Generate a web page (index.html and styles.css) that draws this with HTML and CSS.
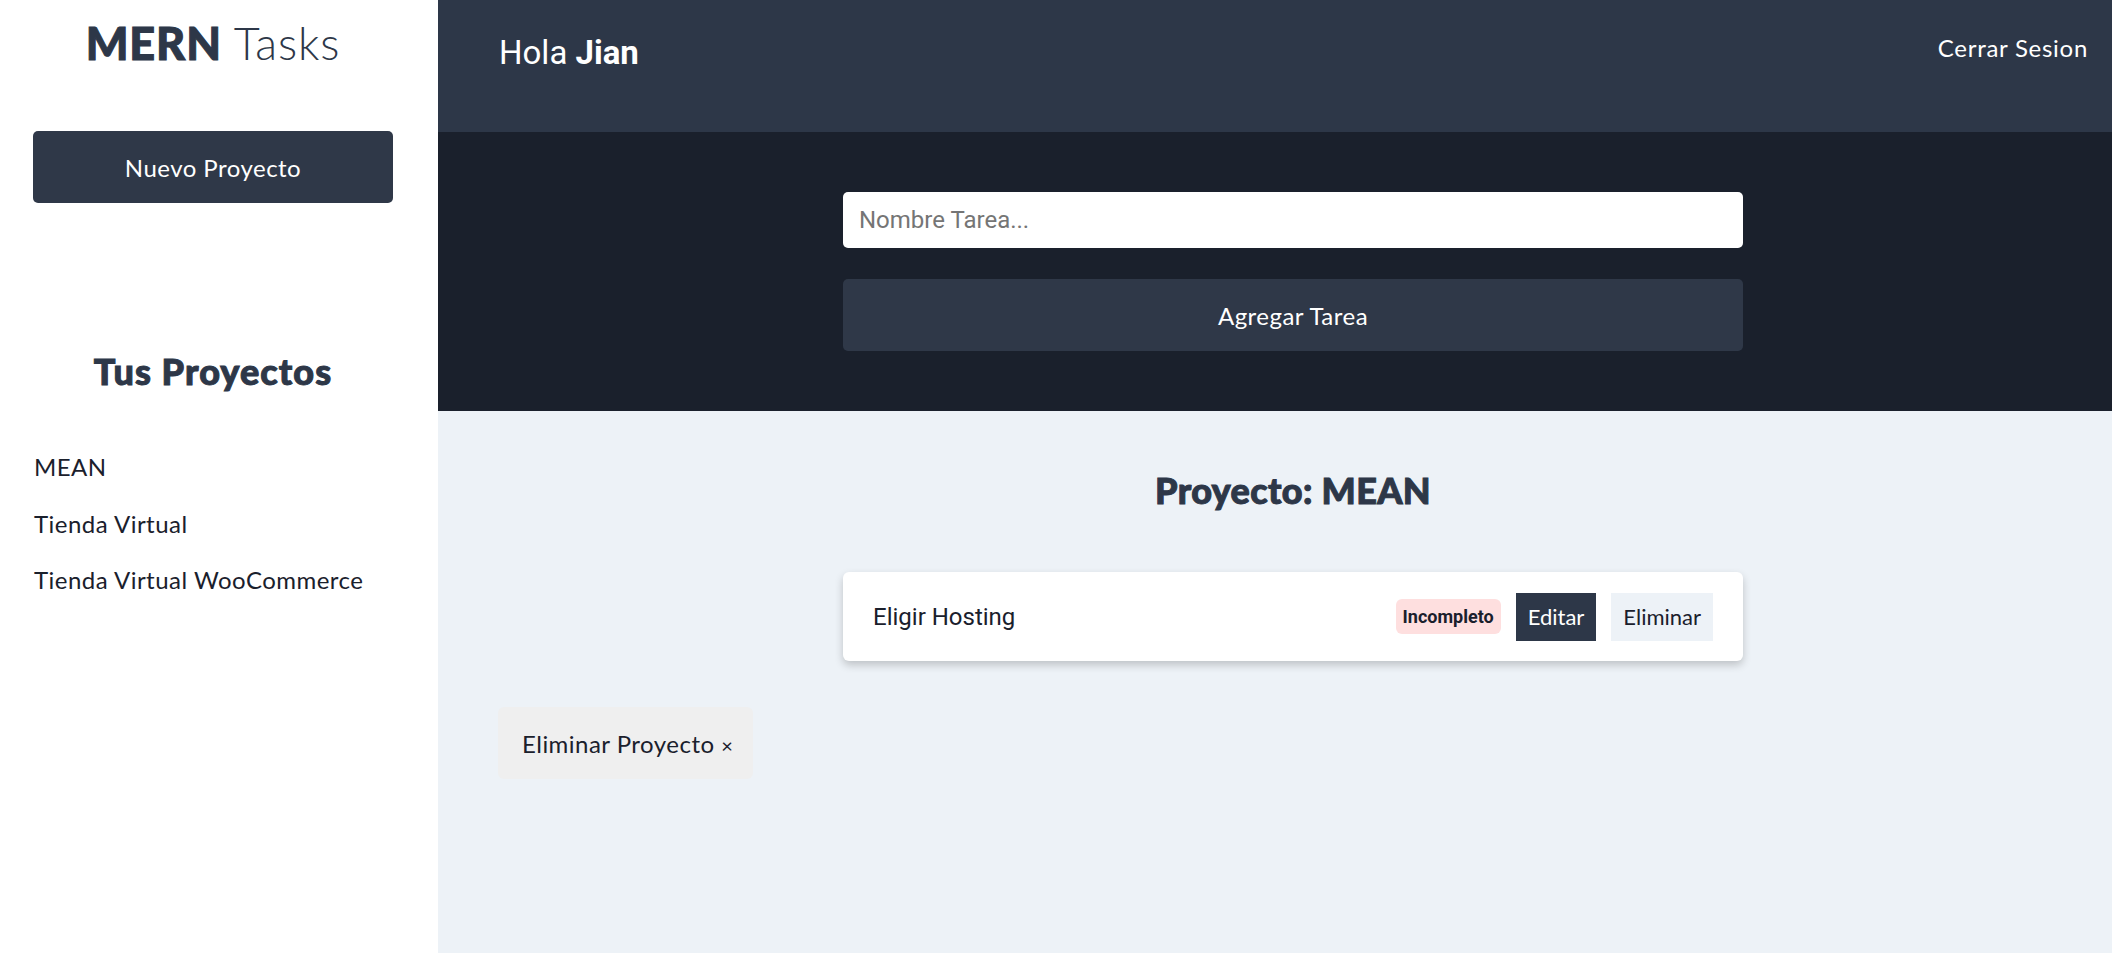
FILE: index.html
```html
<!DOCTYPE html>
<html lang="es">
<head>
<meta charset="utf-8">
<title>MERN Tasks</title>
<link rel="stylesheet" href="styles.css">
</head>
<body>
<div class="app">
  <aside class="sidebar">
    <h1 class="logo"><span class="logo-strong">MERN</span> Tasks</h1>
    <button class="btn-new" type="button">Nuevo Proyecto</button>
    <h2 class="sidebar-title">Tus Proyectos</h2>
    <ul class="project-list">
      <li>MEAN</li>
      <li>Tienda Virtual</li>
      <li>Tienda Virtual WooCommerce</li>
    </ul>
  </aside>
  <div class="main">
    <header class="app-header">
      <p class="user-name">Hola <span class="user-strong">Jian</span></p>
      <nav class="nav"><a href="#" class="nav-link">Cerrar Sesion</a></nav>
    </header>
    <section class="form-section">
      <div class="form-inner">
        <input class="input-text" type="text" placeholder="Nombre Tarea...">
        <button class="btn-add" type="button">Agregar Tarea</button>
      </div>
    </section>
    <section class="content">
      <h2 class="project-title">Proyecto: MEAN</h2>
      <ul class="task-list">
        <li class="task">
          <p class="task-name">Eligir Hosting</p>
          <div class="task-actions">
            <span class="badge">Incompleto</span>
            <button class="btn-edit" type="button">Editar</button>
            <button class="btn-delete" type="button">Eliminar</button>
          </div>
        </li>
      </ul>
      <button class="btn-remove-project" type="button">Eliminar Proyecto <span class="times">&times;</span></button>
    </section>
  </div>
</div>
</body>
</html>
```

FILE: styles.css
```css
* { box-sizing: border-box; }
html, body { margin: 0; padding: 0; }
body {
  overflow: hidden;
  font-family: "Lato", "Open Sans", sans-serif;
  color: #2d3748;
  background: #edf2f7;
}
.app {
  display: flex;
  width: 2148px;
  min-height: 953px;
}
.sidebar {
  flex: 0 0 438px;
  background: #fff;
  padding: 21px 45px 0 33px;
  display: flex;
  flex-direction: column;
}
.logo {
  margin: 0;
  font-size: 45px;
  line-height: 45px;
  font-weight: 300;
  text-align: center;
  color: #2d3748;
  letter-spacing: 0.02em;
}
.logo-strong {
  font-weight: 900;
  -webkit-text-stroke: 1px #2d3748;
}
.btn-new {
  margin-top: 65px;
  height: 72px;
  border: none;
  border-radius: 5px;
  background: #2f3848;
  color: #fff;
  font-family: inherit;
  font-size: 24px;
  letter-spacing: 0.02em;
}
.sidebar-title {
  margin: 150px 0 0;
  font-size: 36px;
  line-height: 36px;
  font-weight: 900;
  text-align: center;
  color: #2d3748;
  letter-spacing: 0.03em;
  -webkit-text-stroke: 1px #2d3748;
}
.project-list {
  list-style: none;
  margin: 66px 0 0;
  padding: 0 0 0 1px;
  display: flex;
  flex-direction: column;
  gap: 32.5px;
}
.project-list li {
  font-size: 24px;
  line-height: 24px;
  color: #1a202c;
  letter-spacing: 0.02em;
}
.main {
  flex: 0 0 1710px;
  display: flex;
  flex-direction: column;
  background: #edf2f7;
}
.app-header {
  height: 132px;
  background: #2d3748;
  display: flex;
  justify-content: space-between;
  align-items: flex-start;
  padding: 36px 60px 0 61px;
}
.user-name {
  margin: 0;
  font-family: "Roboto", sans-serif;
  font-size: 33px;
  line-height: 33px;
  color: #fff;
}
.user-strong { font-weight: 700; }
.nav-link {
  display: block;
  color: #fff;
  text-decoration: none;
  font-size: 24px;
  line-height: 24px;
  letter-spacing: 0.03em;
}
.form-section {
  background: #1a202c;
  padding: 60px 0;
}
.form-inner {
  width: 900px;
  margin: 0 auto;
  display: flex;
  flex-direction: column;
  gap: 31px;
}
.input-text {
  height: 56px;
  border: none;
  border-radius: 5px;
  padding: 0 16px;
  font-family: "Roboto", sans-serif;
  font-size: 24px;
  color: #2d3748;
  background: #fff;
  outline: none;
}
.input-text::placeholder { color: #757575; }
.btn-add {
  height: 72px;
  border: none;
  border-radius: 5px;
  background: #2f3848;
  color: #fff;
  font-family: inherit;
  font-size: 24px;
  letter-spacing: 0.02em;
}
.content {
  padding: 61px 60px 40px;
  display: flex;
  flex-direction: column;
}
.project-title {
  margin: 0;
  font-size: 36px;
  line-height: 36px;
  font-weight: 900;
  text-align: center;
  color: #2d3748;
  letter-spacing: 0.01em;
  -webkit-text-stroke: 1px #2d3748;
}
.task-list {
  list-style: none;
  margin: 64px auto 0;
  padding: 0;
  width: 900px;
}
.task {
  height: 89px;
  background: #fff;
  border-radius: 6px;
  box-shadow: 0 4px 8px rgba(0, 0, 0, 0.2);
  display: flex;
  align-items: center;
  justify-content: space-between;
  padding: 0 30px;
}
.task-name {
  margin: 0;
  font-family: "Roboto", sans-serif;
  font-size: 24px;
  color: #1a202c;
}
.task-actions {
  display: flex;
  align-items: center;
  gap: 15px;
}
.badge {
  display: flex;
  align-items: center;
  height: 35px;
  padding: 0 7px;
  border-radius: 6px;
  background: #fedfdf;
  font-family: "Roboto", sans-serif;
  font-weight: 700;
  font-size: 18px;
  color: #1a202c;
}
.btn-edit, .btn-delete {
  height: 48px;
  border: none;
  border-radius: 0;
  padding: 0 12px;
  font-family: inherit;
  font-size: 22px;
  letter-spacing: 0;
}
.btn-edit { background: #2d3748; color: #fff; }
.btn-delete { background: #edf2f7; color: #1a202c; }
.btn-remove-project {
  align-self: flex-start;
  margin-top: 46px;
  height: 72px;
  width: 255px;
  border: none;
  border-radius: 6px;
  background: #efefef;
  color: #1a202c;
  font-family: inherit;
  font-size: 24px;
  text-align: left;
  padding: 0 0 0 24px;
  letter-spacing: 0.02em;
}
.times { font-size: 20px; }
```
